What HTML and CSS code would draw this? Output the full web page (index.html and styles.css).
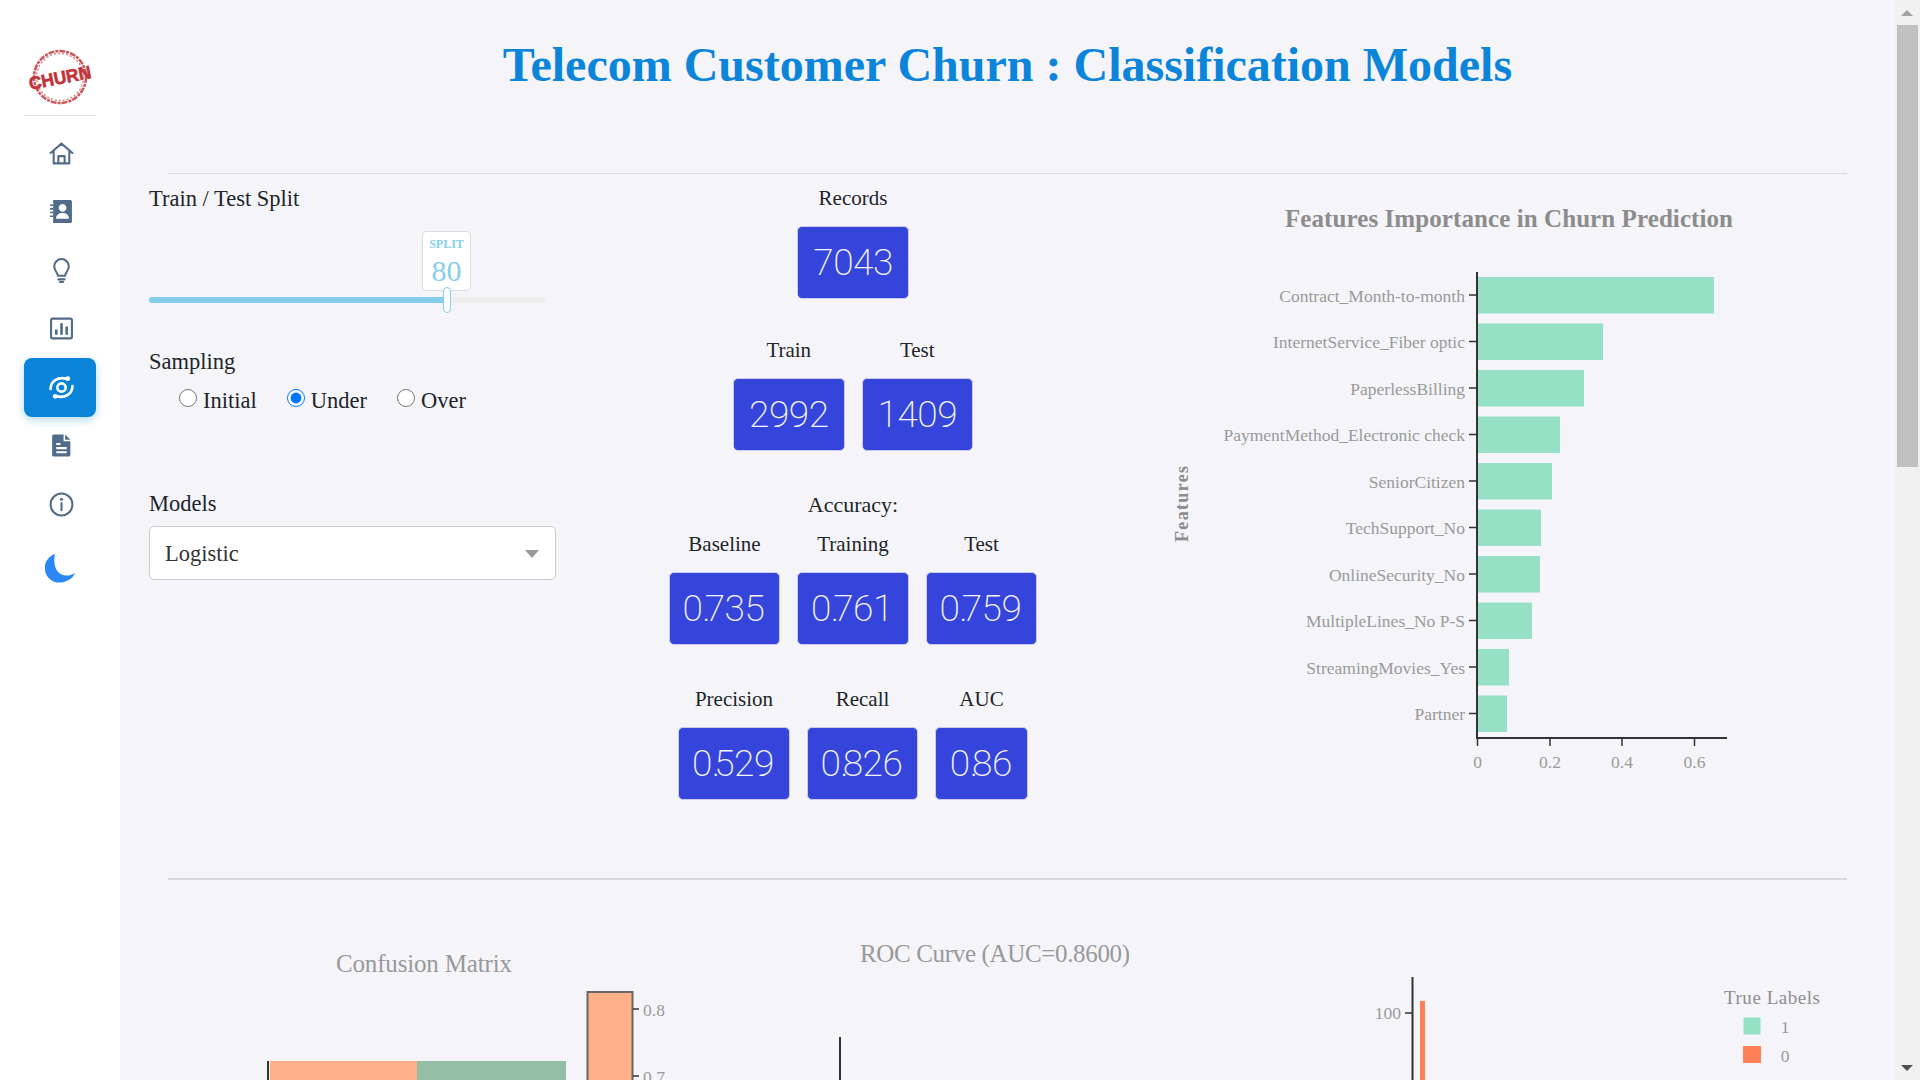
FILE: index.html
```html
<!DOCTYPE html>
<html lang="en">
<head>
<meta charset="utf-8">
<title>Telecom Customer Churn</title>
<link rel="stylesheet" href="styles.css">
</head>
<body>
<div class="app">
  <aside class="sidebar">
    <div class="logo">
      <svg width="76" height="60" viewBox="0 0 76 60">
        <circle cx="38" cy="29" r="26" class="logo-ring"/>
        <circle cx="38" cy="29" r="23.5" class="logo-ring-thin"/>
        <text x="38" y="36" text-anchor="middle" transform="rotate(-11 38 30)" class="logo-text" textLength="63" lengthAdjust="spacingAndGlyphs">CHURN</text>
      </svg>
    </div>
    <div class="side-rule"></div>
    <nav class="nav">
      <a class="nav-item"><svg class="ic" viewBox="0 0 24 24"><path d="M1.5 11.5 12 2.5l10.500 9M4.500 9.500V21.500h15V9.500M9 21.500v-7h6v7" class="st"/></svg></a>
      <a class="nav-item"><svg class="ic" viewBox="0 0 24 24"><path d="M4 1h16.500a1.500 1.500 0 0 1 1.500 1.500v19a1.500 1.500 0 0 1-1.500 1.500H4zM13 4.800a3.700 3.700 0 1 0 .01 0zM6.800 19h12.400c0-3.600-2.700-5.500-6.200-5.500S6.800 15.400 6.800 19z" class="fl" fill-rule="evenodd"/><path d="M1 6h3M1 9.500h3M1 13h3M1 16.500h3" class="st-thin"/></svg></a>
      <a class="nav-item"><svg class="ic" viewBox="0 0 24 24"><path d="M8.500 17c0-3-3.500-4.500-3.500-9a7 7 0 0 1 14 0c0 4.500-3.500 6-3.500 9z" class="st"/><path d="M9 20.500h6M10.500 23h3" class="st"/></svg></a>
      <a class="nav-item"><svg class="ic" viewBox="0 0 24 24"><rect x="2" y="2.500" width="20" height="19" rx="1.500" class="st"/><path d="M7 18v-5M12 18V7M17 18v-8" class="st-bar"/></svg></a>
      <a class="nav-item is-active"><svg class="ic" viewBox="0 0 24 24"><circle cx="12" cy="12" r="4" class="st-w"/><path d="M1.500 13.500C1.500 6 8.500 1.500 16.500 3.500M22.500 10.500C22.500 18 15.500 22.500 7.500 20.500" class="st-w"/><circle cx="18" cy="3.500" r="2.300" class="dot-w"/><circle cx="6" cy="20.500" r="2.300" class="dot-w"/></svg></a>
      <a class="nav-item"><svg class="ic" viewBox="0 0 24 24"><path d="M4.500 1.500h9.500v6.500h6.500v13a1.500 1.500 0 0 1-1.500 1.500H4.500A1.500 1.500 0 0 1 3 21V3a1.500 1.500 0 0 1 1.500-1.500zM15.500 1.500l5 5h-5zM7 9.500v2h4v-2zM7 13.500v2h10v-2zM7 17.500v2h10v-2z" class="fl" fill-rule="evenodd"/></svg></a>
      <a class="nav-item"><svg class="ic" viewBox="0 0 24 24"><circle cx="12" cy="12" r="10.500" class="st"/><path d="M12 10.500v7" class="st"/><circle cx="12" cy="7" r="1.500" class="fl"/></svg></a>
    </nav>
    <div class="moon">
      <svg width="34" height="34" viewBox="0 0 34 34"><path d="M12 2C5 4.500 1 10.500 2 18c1 8 8 13.500 16.500 12.500 6.500-1 11.500-4.500 13.500-9.500-3.500 2.500-9 3.500-13.500 1.500C12 19.500 10 10.500 12 2z" class="moon-path"/></svg>
    </div>
  </aside>

  <main class="main">
    <header class="page-head"><h1 class="page-title">Telecom Customer Churn : Classification Models</h1></header>
    <div class="rule"></div>
    <section class="top-row">
      <div class="controls">
        <div class="ctl-label">Train / Test Split</div>
        <div class="slider">
          <div class="slider-tip"><span class="tip-name">SPLIT</span><span class="tip-val">80</span></div>
          <div class="slider-track"><div class="slider-fill"></div></div>
          <div class="slider-handle"></div>
        </div>
        <div class="ctl-label sampling-label">Sampling</div>
        <div class="radios">
          <label class="radio"><input type="radio" name="s">Initial</label>
          <label class="radio"><input type="radio" name="s" checked>Under</label>
          <label class="radio"><input type="radio" name="s">Over</label>
        </div>
        <div class="ctl-label models-label">Models</div>
        <div class="select"><span>Logistic</span><i class="select-arrow"></i></div>
      </div>

      <div class="metrics">
        <div class="metric-row">
          <div class="metric"><div class="metric-label">Records</div><div class="led">7043</div></div>
        </div>
        <div class="metric-row row-first">
          <div class="metric"><div class="metric-label">Train</div><div class="led">2992</div></div>
          <div class="metric"><div class="metric-label">Test</div><div class="led">1409</div></div>
        </div>
        <div class="metric-title">Accuracy:</div>
        <div class="metric-row row-tight">
          <div class="metric"><div class="metric-label">Baseline</div><div class="led">0<span class="pt">.</span>735</div></div>
          <div class="metric"><div class="metric-label">Training</div><div class="led">0<span class="pt">.</span>761</div></div>
          <div class="metric"><div class="metric-label">Test</div><div class="led">0<span class="pt">.</span>759</div></div>
        </div>
        <div class="metric-row row-last">
          <div class="metric"><div class="metric-label">Precision</div><div class="led">0<span class="pt">.</span>529</div></div>
          <div class="metric"><div class="metric-label">Recall</div><div class="led">0<span class="pt">.</span>826</div></div>
          <div class="metric"><div class="metric-label">AUC</div><div class="led led-short">0<span class="pt">.</span>86</div></div>
        </div>
      </div>

      <div class="importance">
        <svg width="765" height="700" viewBox="1130 174 765 700">
          <text x="1509" y="227" text-anchor="middle" class="c-title-b" textLength="448">Features Importance in Churn Prediction</text>
          <text transform="translate(1188 504) rotate(-90)" text-anchor="middle" class="c-axis-b" textLength="76">Features</text>
          <g class="bar-mint">
            <rect x="1478" y="277" width="236" height="36.500"/>
            <rect x="1478" y="323.500" width="125" height="36.500"/>
            <rect x="1478" y="370" width="106" height="36.500"/>
            <rect x="1478" y="416.500" width="82" height="36.500"/>
            <rect x="1478" y="463" width="74" height="36.500"/>
            <rect x="1478" y="509.500" width="63" height="36.500"/>
            <rect x="1478" y="556" width="62" height="36.500"/>
            <rect x="1478" y="602.500" width="54" height="36.500"/>
            <rect x="1478" y="649" width="31" height="36.500"/>
            <rect x="1478" y="695.500" width="29" height="36.500"/>
          </g>
          <path class="axis" d="M1477 272V738.500M1476 738H1727"/>
          <path class="tick" d="M1469 295H1477M1469 341.500H1477M1469 388H1477M1469 434.500H1477M1469 481H1477M1469 527.500H1477M1469 574H1477M1469 620.500H1477M1469 667H1477M1469 713.500H1477M1477.500 738V746M1550 738V746M1622 738V746M1694.500 738V746"/>
          <g class="c-tick" text-anchor="end">
            <text x="1465" y="302">Contract_Month-to-month</text>
            <text x="1465" y="348">InternetService_Fiber optic</text>
            <text x="1465" y="395">PaperlessBilling</text>
            <text x="1465" y="441">PaymentMethod_Electronic check</text>
            <text x="1465" y="488">SeniorCitizen</text>
            <text x="1465" y="534">TechSupport_No</text>
            <text x="1465" y="581">OnlineSecurity_No</text>
            <text x="1465" y="627">MultipleLines_No P-S</text>
            <text x="1465" y="674">StreamingMovies_Yes</text>
            <text x="1465" y="720">Partner</text>
          </g>
          <g class="c-tick" text-anchor="middle">
            <text x="1477.500" y="768">0</text>
            <text x="1550" y="768">0.2</text>
            <text x="1622" y="768">0.4</text>
            <text x="1694.500" y="768">0.6</text>
          </g>
        </svg>
      </div>
    </section>
    <div class="rule rule-b"></div>
    <section class="bottom-row">
      <svg class="chart-cm" width="551" height="200" viewBox="149 880 551 200">
        <text x="424" y="972" text-anchor="middle" class="c-title" textLength="176">Confusion Matrix</text>
        <rect x="270" y="1061" width="147" height="30" class="cm-a"/>
        <rect x="417" y="1061" width="149" height="30" class="cm-b"/>
        <path class="axis" d="M268 1061V1090"/>
        <rect x="587.500" y="992" width="45" height="100" class="cb"/>
        <path class="tick" d="M633 1009H639M633 1076H639"/>
        <g class="c-tick"><text x="643" y="1016">0.8</text><text x="643" y="1083">0.7</text></g>
      </svg>
      <svg class="chart-roc" width="560" height="200" viewBox="700 880 560 200">
        <text x="995" y="962" text-anchor="middle" class="c-title" textLength="270">ROC Curve (AUC=0.8600)</text>
        <path class="axis" d="M840 1037V1090"/>
      </svg>
      <svg class="chart-hist" width="635" height="200" viewBox="1260 880 635 200">
        <path class="axis" d="M1412.500 977V1090"/>
        <path class="tick" d="M1405 1013H1412"/>
        <text x="1401" y="1019" text-anchor="end" class="c-tick">100</text>
        <rect x="1420" y="1001" width="5" height="90" class="bar-coral"/>
        <text x="1772" y="1004" text-anchor="middle" class="c-legend" textLength="96">True Labels</text>
        <rect x="1743.500" y="1017.500" width="17" height="17" class="bar-mint"/>
        <text x="1785" y="1033" text-anchor="middle" class="c-tick">1</text>
        <rect x="1743" y="1046" width="18" height="17" class="bar-coral"/>
        <text x="1785" y="1062" text-anchor="middle" class="c-tick">0</text>
      </svg>
    </section>
  </main>

  <div class="scrollbar">
    <i class="sb-up"></i>
    <div class="sb-thumb"></div>
    <i class="sb-down"></i>
  </div>
</div>
</body>
</html>
```
FILE: styles.css
```css
* { box-sizing: border-box; }
html, body { margin: 0; height: 100%; overflow: hidden; }
body { font-family: "Liberation Serif", "Times New Roman", serif; color: #212529; background: #f4f4f9; }
.app { display: flex; height: 1080px; overflow: hidden; }

/* sidebar */
.sidebar { width: 120px; flex: none; background: #fff; display: flex; flex-direction: column; align-items: center; padding-top: 48px; }
.logo { height: 62px; display: flex; justify-content: center; }
.logo-ring { fill: none; stroke: #c2393e; stroke-width: 2.5; stroke-dasharray: 6 1 3 1; opacity: .85; }
.logo-ring-thin { fill: none; stroke: #c2393e; stroke-width: 1.500; stroke-dasharray: 2 2; opacity: .6; }
.logo-text { font: 900 18px "Liberation Sans", Arial, sans-serif; fill: #c2343a; stroke: #c2343a; stroke-width: .6; }
.side-rule { width: 72px; height: 1px; background: #ddd; margin-top: 5px; }
.nav { display: flex; flex-direction: column; width: 72px; margin-top: 8px; }
.nav-item { height: 58.500px; display: flex; align-items: center; justify-content: center; padding-left: 3px; border-radius: 8px; }
.nav-item.is-active { background: #0984d8; box-shadow: 0 3px 8px rgba(9,132,216,.3); }
.ic { width: 25px; height: 25px; display: block; }
.st { fill: none; stroke: #516b8a; stroke-width: 2; stroke-linejoin: round; stroke-linecap: round; }
.st-thin { fill: none; stroke: #516b8a; stroke-width: 1.500; }
.st-bar { fill: none; stroke: #516b8a; stroke-width: 2.500; }
.fl { fill: #516b8a; }
.st-w { fill: none; stroke: #fff; stroke-width: 2.500; stroke-linecap: round; }
.dot-w { fill: #fff; }
.moon { margin-top: 18px; height: 34px; }
.moon-path { fill: #2b87f5; }

/* main */
.main { flex: 1; min-width: 0; display: flex; flex-direction: column; }
.page-head { height: 173px; padding-top: 37px; }
.page-title { margin: 0; text-align: center; font-size: 48px; line-height: 56px; font-weight: 700; color: #0a85d9; }
.rule { height: 1px; background: #dcdce0; margin: 0 48px; flex: none; }
.rule-b { height: 2px; background: #d8d8dc; }
.top-row { height: 704px; flex: none; display: flex; padding-left: 29px; }

/* left controls */
.controls { width: 407px; flex: none; padding-top: 12px; }
.ctl-label { font-size: 22.500px; line-height: 26px; color: #212529; }
.slider { position: relative; height: 82px; margin-top: 19px; width: 397px; }
.slider-track { position: absolute; left: 0; right: 0; top: 66px; height: 6px; border-radius: 3px; background: #eee; }
.slider-fill { width: 297px; height: 100%; border-radius: 3px; background: #85cfec; }
.slider-handle { position: absolute; left: 294px; top: 56px; width: 8px; height: 26px; background: #fff; border: 1.500px solid #85cfec; border-radius: 4px; }
.slider-tip { position: absolute; left: 273px; top: 0; width: 49px; height: 60px; background: #fff; border: 1px solid #ddd; border-radius: 4px; display: flex; flex-direction: column; align-items: center; color: #85cfec; }
.tip-name { font-size: 12px; font-weight: 700; line-height: 14px; margin-top: 5px; }
.tip-val { font-size: 30px; line-height: 32px; margin-top: 4px; }
.sampling-label { margin-top: 36px; }
.radios { display: flex; gap: 30px; margin-top: 13px; padding-left: 30px; height: 26px; }
.radio { display: flex; align-items: center; gap: 6px; font-size: 22.500px; line-height: 26px; }
.radio input { width: 18px; height: 18px; margin: 0 0 7px; }
.models-label { margin-top: 77px; }
.select { margin-top: 9px; width: 407px; height: 54px; background: #fff; border: 1px solid #ccc; border-radius: 5px; padding: 2px 16px 0 15px; display: flex; align-items: center; justify-content: space-between; font-size: 22.500px; color: #333; }
.select-arrow { width: 0; height: 0; border-left: 7.500px solid transparent; border-right: 7.500px solid transparent; border-top: 8px solid #999; }

/* metrics */
.metrics { width: 514px; margin-left: 40px; flex: none; padding-top: 11px; display: flex; flex-direction: column; align-items: center; }
.metric-row { display: flex; gap: 17px; justify-content: center; }
.row-first { margin-top: 38px; }
.row-tight { margin-top: 13px; }
.row-last { margin-top: 41px; }
.metric { display: flex; flex-direction: column; align-items: center; }
.metric-label, .metric-title { font-size: 21px; line-height: 26px; color: #212529; text-align: center; }
.metric-title { margin-top: 41px; font-size: 22px; }
.led { margin-top: 15px; width: 111.500px; height: 73px; background: #3545db; border: 1px solid #c9cbe8; border-radius: 5px; color: #f4f5ff; font-family: Roboto, "Liberation Sans", sans-serif; font-weight: 200; font-size: 37px; line-height: 72px; text-align: right; padding-right: 15px; letter-spacing: -.5px; white-space: nowrap; }
.led-short { width: 92.500px; }
.pt { letter-spacing: -6px; }

/* charts */
.importance { flex: 1; min-width: 0; margin-left: 20px; overflow: hidden; }
.importance svg, .bottom-row svg { display: block; flex: none; }
text { font-family: "Liberation Serif", "Times New Roman", serif; }
.c-title-b { font-size: 25px; font-weight: 700; fill: #8c8c8c; }
.c-title { font-size: 25px; fill: #999; }
.c-axis-b { font-size: 18px; font-weight: 700; fill: #8c8c8c; }
.c-tick, .c-tick text { font-size: 17.500px; fill: #9a9a9a; }
.c-legend { font-size: 19px; fill: #8f8f8f; }
.bar-mint, .bar-mint rect { fill: #96e0c5; }
.bar-coral { fill: #ff7f57; }
.axis { fill: none; stroke: #333; stroke-width: 2; }
.tick { fill: none; stroke: #333; stroke-width: 1.500; }
.cm-a { fill: #ffb088; }
.cm-b { fill: #93bea5; }
.cb { fill: #ffb088; stroke: #666; stroke-width: 2; }
.bottom-row { display: flex; padding-left: 29px; height: 200px; overflow: hidden; flex: none; }

/* scrollbar */
.scrollbar { width: 25px; flex: none; background: #f1f1f1; position: relative; padding: 25px 2px; }
.sb-thumb { height: 442px; background: #c1c1c1; }
.sb-up, .sb-down { position: absolute; left: 6px; width: 0; height: 0; border-left: 6px solid transparent; border-right: 6px solid transparent; }
.sb-up { top: 10px; border-bottom: 6px solid #a3a3a3; }
.sb-down { bottom: 9px; border-top: 6px solid #505050; }
```
